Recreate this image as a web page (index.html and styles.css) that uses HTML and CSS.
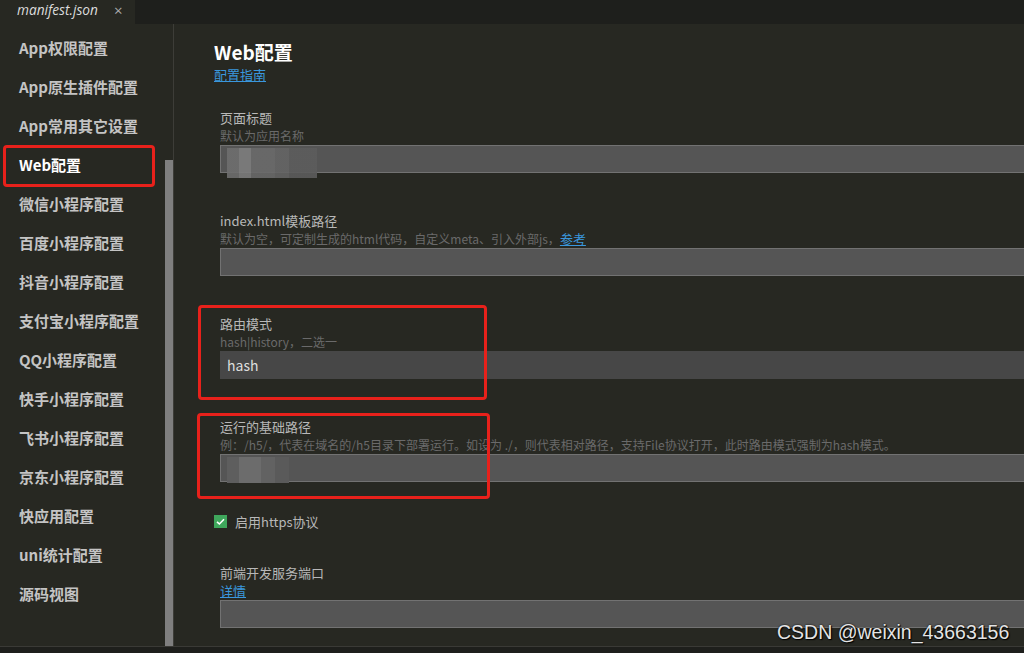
FILE: index.html
```html
<!DOCTYPE html>
<html lang="zh">
<head>
    <meta charset="UTF-8">
    <title>manifest.json</title>
    <link rel="stylesheet" href="styles.css">
</head>
<body>
    <div class="tabbar">
        <div class="tab">
            <span class="tab-name">manifest.json</span>
            <span class="tab-close">×</span>
        </div>
    </div>
    <div class="main">
        <div class="sidebar">
            <ul class="nav">
                <li>App权限配置</li>
                <li>App原生插件配置</li>
                <li>App常用其它设置</li>
                <li class="active">Web配置</li>
                <li>微信小程序配置</li>
                <li>百度小程序配置</li>
                <li>抖音小程序配置</li>
                <li>支付宝小程序配置</li>
                <li>QQ小程序配置</li>
                <li>快手小程序配置</li>
                <li>飞书小程序配置</li>
                <li>京东小程序配置</li>
                <li>快应用配置</li>
                <li>uni统计配置</li>
                <li>源码视图</li>
            </ul>
            <div class="scrollbar"></div>
        </div>
        <div class="content">
            <h1 class="title">Web配置</h1>
            <div class="guide"><a class="link">配置指南</a></div>

            <div class="field first">
                <div class="label">页面标题</div>
                <div class="desc">默认为应用名称</div>
                <div class="input"><span class="blur blur-a"></span></div>
            </div>

            <div class="field">
                <div class="label">index.html模板路径</div>
                <div class="desc">默认为空，可定制生成的html代码，自定义meta、引入外部js，<a class="link">参考</a></div>
                <div class="input"></div>
            </div>

            <div class="field">
                <div class="label">路由模式</div>
                <div class="desc">hash|history，二选一</div>
                <div class="input input-dark">hash</div>
                <div class="mark mark-a"></div>
            </div>

            <div class="field">
                <div class="label">运行的基础路径</div>
                <div class="desc">例：/h5/，代表在域名的/h5目录下部署运行。如设为 ./，则代表相对路径，支持File协议打开，此时路由模式强制为hash模式。</div>
                <div class="input"><span class="blur blur-b"></span></div>
                <div class="mark mark-b"></div>
            </div>

            <div class="check-row">
                <span class="checkbox">
                    <svg width="13" height="13" viewBox="0 0 13 13"><path d="M3 6.8 L5.4 9 L10 4.2" fill="none" stroke="#fff" stroke-width="1.6"/></svg>
                </span>
                <span class="check-text">启用https协议</span>
            </div>

            <div class="field last">
                <div class="label">前端开发服务端口</div>
                <div class="desc"><a class="link">详情</a></div>
                <div class="input"></div>
            </div>
        </div>
    </div>
    <div class="footer"></div>
    <div class="watermark">CSDN @weixin_43663156</div>
</body>
</html>
```

FILE: styles.css
```css
*,
*::before,
*::after {
    margin: 0;
    padding: 0;
    box-sizing: border-box;
}

body {
    width: 1024px;
    height: 653px;
    overflow: hidden;
    background-color: #272822;
    font-family: "Noto Sans CJK SC", "Noto Sans", sans-serif;
    position: relative;
}

.tabbar {
    height: 24px;
    background-color: #1e1f1c;
    display: flex;
}

.tab {
    width: 135px;
    height: 24px;
    background-color: #272822;
    display: flex;
    align-items: center;
    padding-left: 17px;
    color: #dcdcdc;
    font-family: "Open Sans", sans-serif;
    font-size: 13.7px;
}

.tab-name {
    font-style: italic;
    margin-top: -5px;
}

.tab-close {
    margin-left: 16px;
    margin-top: -5px;
    color: #aaa;
    font-size: 15px;
}

.main {
    display: flex;
    height: 622px;
}

.sidebar {
    width: 174px;
    display: flex;
    border-right: 1px solid #3d3d38;
}

.nav {
    list-style: none;
    flex: 1;
    padding-top: 4px;
}

.nav li {
    height: 39px;
    line-height: 39px;
    padding-left: 19px;
    font-size: 15px;
    font-weight: bold;
    color: #c4c4c4;
    white-space: nowrap;
    position: relative;
}

.nav li.active {
    color: #fff;
}

.nav li.active::after {
    content: "";
    position: absolute;
    left: 3px;
    top: 0;
    width: 152px;
    height: 42px;
    border: 3px solid #e8211b;
    border-radius: 4px;
}

.scrollbar {
    width: 8px;
    margin-top: 136px;
    background-color: #7f7f7f;
}

.content {
    flex: 1;
    padding: 15px 0 0 40px;
    overflow: hidden;
}

.title {
    font-size: 19px;
    font-weight: bold;
    line-height: 26px;
    color: #fff;
}

.guide {
    height: 18px;
    line-height: 18px;
    margin-top: -1px;
}

.link {
    font-size: 13px;
    line-height: 18px;
    color: #3a97dd;
    text-decoration: underline;
}

.field {
    padding-left: 6px;
    margin-bottom: 39px;
    position: relative;
}

.field.first {
    margin-top: 27px;
}

.label {
    font-size: 13px;
    line-height: 18px;
    color: #b8b8b8;
}

.desc {
    font-size: 12px;
    line-height: 18px;
    height: 18px;
    color: #6a6a6a;
    white-space: nowrap;
}

.desc .link {
    font-size: 13px;
}

.input {
    height: 28px;
    width: 900px;
    background-color: #555555;
    border: 1px solid #727272;
    font-size: 14px;
    line-height: 26px;
    color: #dedede;
    padding-left: 6px;
    position: relative;
}

.input-dark {
    background-color: #474747;
    border-color: #474747;
}

.blur {
    position: absolute;
    display: block;
}

.blur-a {
    left: 6px;
    top: 2px;
    width: 90px;
    height: 30px;
    background: linear-gradient(90deg, #6e6e6e 0 12px, #7d7d7d 12px 24px, #6a6a6a 24px 48px, #646464 48px 62px, #5c5c5c 62px 90px);
    opacity: 0.9;
}

.blur-b {
    left: 6px;
    top: 2px;
    width: 62px;
    height: 26px;
    background: linear-gradient(90deg, #5e5e5e 0 12px, #6c6c6c 12px 34px, #626262 34px 48px, #5a5a5a 48px 62px);
}

.mark {
    position: absolute;
    border: 3px solid #e8211b;
    border-radius: 4px;
}

.mark-a {
    left: -16px;
    top: -10px;
    width: 289px;
    height: 95px;
}

.mark-b {
    left: -17px;
    top: -5px;
    width: 293px;
    height: 86px;
}

.check-row {
    display: flex;
    align-items: center;
    height: 18px;
    margin-top: -9px;
    margin-bottom: 34px;
}

.checkbox {
    width: 13px;
    height: 13px;
    background-color: #3fa75c;
    display: flex;
}

.check-text {
    margin-left: 8px;
    font-size: 13px;
    color: #b8b8b8;
}

.field.last {
    margin-bottom: 0;
}

.footer {
    height: 7px;
    background-color: #1e1f1c;
    border-top: 1px solid #3a3a36;
}

.watermark {
    position: absolute;
    left: 777px;
    top: 621px;
    font-family: "Liberation Sans", sans-serif;
    font-size: 19.5px;
    color: #e4e4e4;
    text-shadow: 0 0 2px #000, 1px 1px 1px #000;
}
```
